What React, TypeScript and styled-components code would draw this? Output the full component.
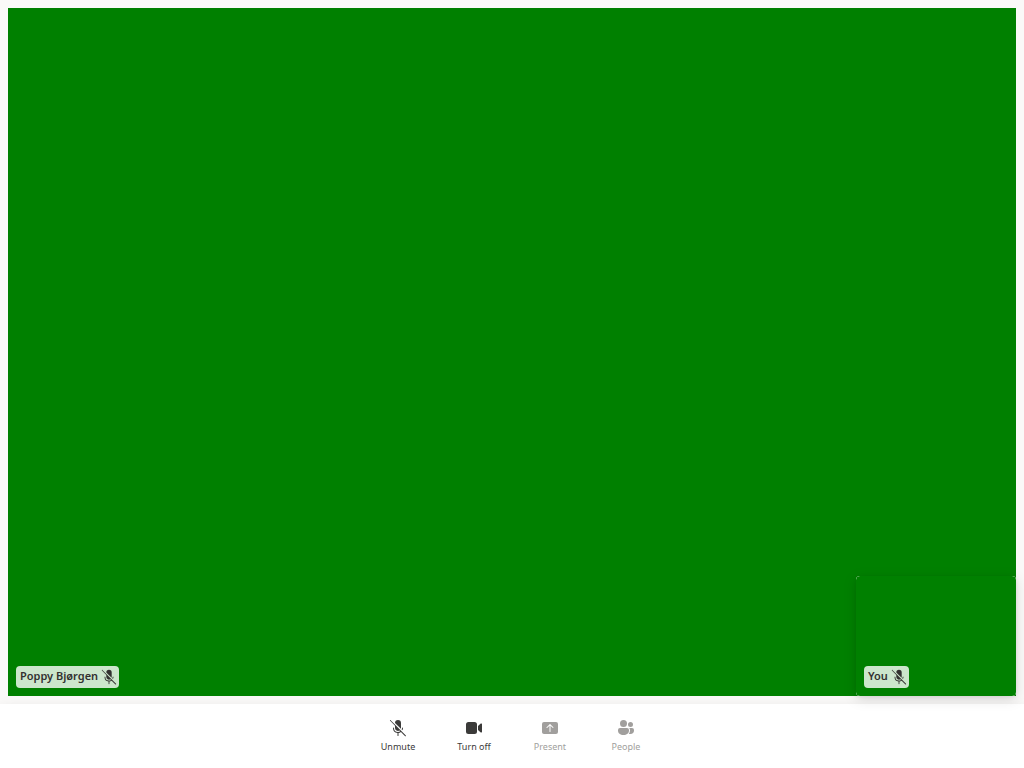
import React from 'react';
import styled, { createGlobalStyle } from 'styled-components';

const GlobalStyle = createGlobalStyle`
  *, *::before, *::after { box-sizing: border-box; }
  body {
    margin: 0;
    background: #faf9f8;
    color: #323130;
    font-family: "Noto Sans", sans-serif;
  }
`;

const Page = styled.div`
  display: flex;
  flex-direction: column;
  min-height: 100vh;
`;

const Stage = styled.main`
  flex: 1;
  display: flex;
  padding: 8px;
`;

const RemoteVideo = styled.section`
  position: relative;
  flex: 1;
  display: flex;
  align-items: flex-end;
  padding: 8px;
  background: #008000;
`;

const LocalVideo = styled.section`
  position: absolute;
  right: 0;
  bottom: 0;
  width: 160px;
  height: 120px;
  border-radius: 4px;
  overflow: hidden;
  background: #faf9f8;
  box-shadow: 0 3px 14px rgba(0, 0, 0, 0.13), 0 1px 4px rgba(0, 0, 0, 0.08);
`;

const LocalStream = styled.div`
  display: flex;
  align-items: flex-end;
  height: 100%;
  padding: 8px;
  border-radius: 4px;
  background: #008000;
`;

const NameTag = styled.div`
  display: flex;
  align-items: center;
  gap: 2px;
  height: 22px;
  padding: 0 1px 0 4px;
  border-radius: 4px;
  background: rgba(255, 255, 255, 0.8);
  font-size: 11px;
  font-weight: 600;
  line-height: 20px;
  white-space: nowrap;
`;

const TagText = styled.span`
  padding-bottom: 2px;
`;

const ControlBar = styled.footer`
  display: flex;
  justify-content: center;
  height: 64px;
  background: #fff;
  box-shadow: 0 6px 14px rgba(0, 0, 0, 0.13);
`;

const ControlButton = styled.button`
  display: flex;
  flex-direction: column;
  align-items: center;
  width: 76px;
  padding: 14px 0 8px;
  border: 0;
  background: transparent;
  color: #3b3a39;
  font-family: inherit;
  font-size: 9px;
  line-height: 18px;
  cursor: pointer;

  &:disabled {
    color: #a19f9d;
    cursor: default;
  }
`;

const Glyph = styled.svg<{ $size: number }>`
  display: block;
  flex: none;
  width: ${(p) => p.$size}px;
  height: ${(p) => p.$size}px;
  fill: currentColor;
`;

type IconProps = { size?: number; children?: React.ReactNode };

const Icon = ({ size = 20, children }: IconProps) => (
  <Glyph $size={size} viewBox="0 0 20 20" aria-hidden="true">
    {children}
  </Glyph>
);

const MicOffIcon = ({ size }: { size?: number }) => (
  <Icon size={size}>
    <path d="M2.85 2.15a.5.5 0 1 0-.7.7L7 7.71V10a3 3 0 0 0 4.5 2.6l.73.72A4 4 0 0 1 10 14a4 4 0 0 1-4-4 .5.5 0 0 0-1 0 5 5 0 0 0 4.5 4.98v2.52a.5.5 0 0 0 1 0v-2.52a4.98 4.98 0 0 0 2.45-.94l4.2 4.21a.5.5 0 0 0 .7-.7l-15-15ZM12.88 10.76 7 4.88V5a3 3 0 0 1 6 0v5c0 .26-.04.52-.12.76ZM14.38 12.26l-.76-.76c.25-.45.38-.96.38-1.5a.5.5 0 0 1 1 0c0 .82-.23 1.6-.62 2.26Z" />
  </Icon>
);

const VideoIcon = () => (
  <Icon>
    <path d="M13 6.5A2.5 2.5 0 0 0 10.5 4h-6A2.5 2.5 0 0 0 2 6.5v7A2.5 2.5 0 0 0 4.5 16h6a2.5 2.5 0 0 0 2.5-2.5v-7Zm1 1.43v4.15l2.76 2.35A.75.75 0 0 0 18 13.86V6.19a.75.75 0 0 0-1.24-.57L14 7.93Z" />
  </Icon>
);

const PresentIcon = () => (
  <Icon>
    <path d="M4 4a2 2 0 0 0-2 2v8c0 1.1.9 2 2 2h12a2 2 0 0 0 2-2V6a2 2 0 0 0-2-2H4Zm6 10a.5.5 0 0 1-.5-.5V7.7L7.35 9.85a.5.5 0 1 1-.7-.7l3-3c.2-.2.5-.2.7 0l3 3a.5.5 0 0 1-.7.7L10.5 7.7v5.8a.5.5 0 0 1-.5.5Z" />
  </Icon>
);

const PeopleIcon = () => (
  <Icon>
    <path d="M7.5 2a3.5 3.5 0 1 0 0 7 3.5 3.5 0 0 0 0-7ZM14.500 4a2.5 2.5 0 1 0 0 5 2.5 2.5 0 0 0 0-5ZM4 10a2 2 0 0 0-2 2v.5C2 15.4 4.3 17 7.5 17s5.5-1.6 5.5-4.5V12a2 2 0 0 0-2-2H4ZM13.2 10c.5.5.8 1.2.8 2v.5c0 1.300-.4 2.500-1.200 3.400.5.1 1.100.1 1.700.1 2.200 0 3.500-1.300 3.500-3.500V12a2 2 0 0 0-2-2h-2.800Z" />
  </Icon>
);

const controls = [
  { label: 'Unmute', icon: <MicOffIcon />, disabled: false },
  { label: 'Turn off', icon: <VideoIcon />, disabled: false },
  { label: 'Present', icon: <PresentIcon />, disabled: true },
  { label: 'People', icon: <PeopleIcon />, disabled: true },
];

const ParticipantTag = ({ name }: { name: string }) => (
  <NameTag>
    <TagText>{name}</TagText>
    <MicOffIcon size={18} />
  </NameTag>
);

export default function App() {
  return (
    <Page>
      <GlobalStyle />
      <Stage>
        <RemoteVideo aria-label="Poppy Bjørgen">
          <ParticipantTag name="Poppy Bjørgen" />
          <LocalVideo aria-label="You">
            <LocalStream>
              <ParticipantTag name="You" />
            </LocalStream>
          </LocalVideo>
        </RemoteVideo>
      </Stage>
      <ControlBar>
        {controls.map(({ label, icon, disabled }) => (
          <ControlButton key={label} type="button" disabled={disabled}>
            {icon}
            <span>{label}</span>
          </ControlButton>
        ))}
      </ControlBar>
    </Page>
  );
}
